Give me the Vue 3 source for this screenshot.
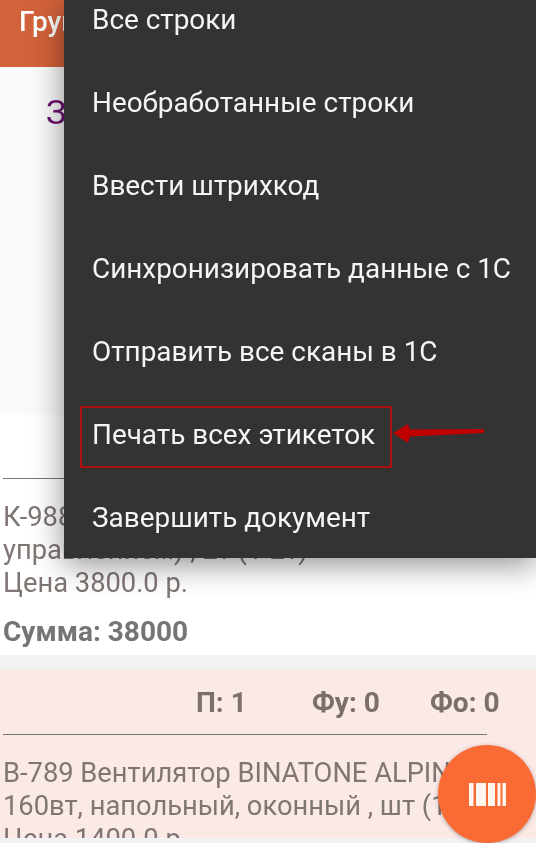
<script setup>
const menuItems = [
  { label: 'Все строки' },
  { label: 'Необработанные строки' },
  { label: 'Ввести штрихкод' },
  { label: 'Синхронизировать данные с 1С' },
  { label: 'Отправить все сканы в 1С' },
  { label: 'Печать всех этикеток', marked: true },
  { label: 'Завершить документ' }
]
const bars = [
  [0, 4.5], [7, 10], [19, 7], [28.5, 3], [33.5, 3.5]
]
</script>

<template>
  <div class="screen">
    <header class="topbar"><span class="topbar-title">Группа</span></header>

    <section class="summary">
      <h2 class="summary-title">Заказ</h2>
    </section>

    <article class="row-card first">
      <div class="rule"></div>
      <p class="desc">К-988 Кондиционер (с пультом<br>управлением) , 2т (1-2т)<br>Цена 3800.0 р.</p>
      <p class="total">Сумма: 38000</p>
    </article>

    <div class="divider-band"></div>

    <article class="row-card second">
      <div class="counters">
        <span>П: 1</span><span>Фу: 0</span><span>Фо: 0</span>
      </div>
      <div class="rule"></div>
      <p class="desc">В-789 Вентилятор BINATONE ALPINE<br>160вт, напольный, оконный , шт (1)<br>Цена 1400.0 р.</p>
    </article>

    <div class="bottom-band"></div>

    <nav class="menu">
      <div v-for="item in menuItems" :key="item.label" class="menu-item">
        <span class="menu-label" :class="{ marked: item.marked }">{{ item.label }}</span>
        <svg v-if="item.marked" class="arrow" width="96" height="24" viewBox="0 0 96 24">
          <path d="M0 10 L15 1 L17 6.500 L90 6 Q93 8 90 10 L17 13.500 L15 20 Z" fill="#c00000" />
        </svg>
      </div>
    </nav>

    <button class="fab" aria-label="Сканировать">
      <svg width="37" height="23" viewBox="0 0 37 23">
        <rect v-for="(b, i) in bars" :key="i" :x="b[0]" y="0" :width="b[1]" height="23" fill="#fff6ee" />
      </svg>
    </button>
  </div>
</template>

<style scoped>
.screen {
  position: relative;
  width: 536px;
  height: 843px;
  overflow: hidden;
  background: #f2f2f2;
  font-family: Roboto, "Liberation Sans", sans-serif;
  filter: blur(0.45px);
}
.topbar {
  height: 67px;
  box-sizing: border-box;
  padding: 4px 0 0 19px;
  background: #d2623a;
}
.topbar-title {
  color: #fff;
  font-size: 28px;
  font-weight: 500;
  line-height: 36px;
}
.summary {
  height: 348px;
  box-sizing: border-box;
  padding: 25px 0 0 46px;
  background: #fafafa;
}
.summary-title {
  margin: 0;
  color: #6a1070;
  font-size: 34px;
  font-weight: 400;
  line-height: 40px;
}
.row-card {
  box-sizing: border-box;
  overflow: hidden;
}
.row-card.first {
  height: 240px;
  padding-top: 63px;
  background: #fff;
}
.row-card.second {
  height: 168px;
  background: #fbe9e6;
}
.divider-band {
  height: 15px;
  background: #f2f2f2;
}
.bottom-band {
  height: 5px;
  background: #f2f2f2;
}
.rule {
  width: 484px;
  height: 1px;
  margin-left: 3px;
  background: #777;
}
.counters {
  display: flex;
  height: 64px;
  align-items: center;
  padding-left: 196px;
  color: #7b6f6d;
  font-size: 28px;
  font-weight: 700;
}
.counters span:nth-child(1) { width: 116px; }
.counters span:nth-child(2) { width: 118px; }
.desc {
  margin: 0;
  padding: 22px 0 0 3px;
  color: #7f7573;
  font-size: 27.3px;
  line-height: 33px;
  white-space: nowrap;
}
.first .desc { padding-top: 22px; }
.total {
  margin: 15px 0 0 3px;
  color: #757575;
  font-size: 28px;
  font-weight: 700;
  line-height: 33px;
}
.menu {
  position: absolute;
  top: 0;
  left: 64px;
  right: 0;
  height: 558px;
  overflow: hidden;
  background: #333;
  box-shadow: 0 6px 30px rgba(0, 0, 0, 0.45);
}
.menu-item {
  position: relative;
  display: flex;
  align-items: center;
  height: 83px;
  padding-left: 16px;
}
.menu-item:first-child { margin-top: -22px; }
.menu-label {
  display: flex;
  align-items: center;
  height: 52px;
  padding: 0 10px;
  border: 2px solid transparent;
  box-sizing: border-box;
  color: #f5f5f5;
  font-size: 27.9px;
  white-space: nowrap;
}
.menu-label.marked {
  height: 62px;
  margin-top: 4px;
  padding: 0 15px 4px 10px;
  border-color: #b00f0f;
}
.arrow {
  margin-left: 1px;
}
.fab {
  position: absolute;
  left: 438px;
  top: 745px;
  width: 98px;
  height: 98px;
  display: flex;
  align-items: center;
  justify-content: center;
  padding: 0;
  border: 0;
  border-radius: 50%;
  background: #fa6a35;
  box-shadow: 0 1px 4px rgba(0, 0, 0, 0.3);
}
</style>
